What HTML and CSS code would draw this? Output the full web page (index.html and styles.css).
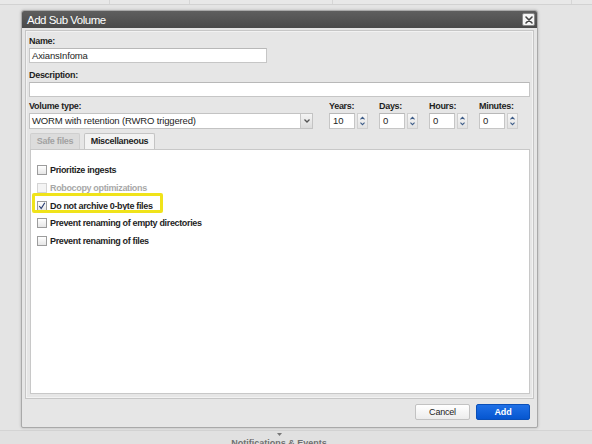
FILE: index.html
```html
<!DOCTYPE html>
<html>
<head>
<meta charset="utf-8">
<link rel="stylesheet" href="styles.css">
</head>
<body>
<div class="page">
  <div class="topbar">
    <span class="cell c1"></span><span class="cell c2"></span><span class="cell c3"></span><span class="cell c4"></span><span class="cell c5"></span>
  </div>
  <div class="spacer"></div>
  <div class="bottombar">
    <span class="caret">
      <svg width="7" height="5" viewBox="0 0 7 5"><path d="M1 1 L3.5 4 L6 1 Z" fill="#777"/></svg>
    </span>
    <span class="notif">Notifications &amp; Events</span>
  </div>
</div>

<div class="dialog">
  <div class="titlebar">
    <span class="title">Add Sub Volume</span>
    <span class="close">
      <svg width="10" height="10" viewBox="0 0 10 10"><path d="M2 2 L8 8 M8 2 L2 8" stroke="#444" stroke-width="1.6" stroke-linecap="round"/></svg>
    </span>
  </div>
  <div class="dbody">
    <div class="panel">
      <div class="field f-name">
        <div class="label">Name:</div>
        <div class="input name">AxiansInfoma</div>
      </div>
      <div class="field f-desc">
        <div class="label">Description:</div>
        <div class="input desc"></div>
      </div>
      <div class="vrow">
        <div class="field f-vt">
          <div class="label">Volume type:</div>
          <div class="select">
            <span class="seltext">WORM with retention (RWRO triggered)</span>
            <span class="selarrow">
              <svg width="8" height="6" viewBox="0 0 8 6"><path d="M1.5 1.5 L4 4 L6.5 1.5" fill="none" stroke="#555" stroke-width="1.3"/></svg>
            </span>
          </div>
        </div>
        <div class="field f-spin">
          <div class="label">Years:</div>
          <div class="spinner">
            <div class="input num">10</div>
            <div class="spinbtn"><svg width="11" height="16" viewBox="0 0 11 16"><path d="M3 6 L5.5 3.5 L8 6" fill="none" stroke="#3d5c88" stroke-width="1.3"/><path d="M3 10 L5.5 12.5 L8 10" fill="none" stroke="#3d5c88" stroke-width="1.3"/></svg></div>
          </div>
        </div>
        <div class="field f-spin">
          <div class="label">Days:</div>
          <div class="spinner">
            <div class="input num">0</div>
            <div class="spinbtn"><svg width="11" height="16" viewBox="0 0 11 16"><path d="M3 6 L5.5 3.5 L8 6" fill="none" stroke="#3d5c88" stroke-width="1.3"/><path d="M3 10 L5.5 12.5 L8 10" fill="none" stroke="#3d5c88" stroke-width="1.3"/></svg></div>
          </div>
        </div>
        <div class="field f-spin">
          <div class="label">Hours:</div>
          <div class="spinner">
            <div class="input num">0</div>
            <div class="spinbtn"><svg width="11" height="16" viewBox="0 0 11 16"><path d="M3 6 L5.5 3.5 L8 6" fill="none" stroke="#3d5c88" stroke-width="1.3"/><path d="M3 10 L5.5 12.5 L8 10" fill="none" stroke="#3d5c88" stroke-width="1.3"/></svg></div>
          </div>
        </div>
        <div class="field f-spin">
          <div class="label">Minutes:</div>
          <div class="spinner">
            <div class="input num">0</div>
            <div class="spinbtn"><svg width="11" height="16" viewBox="0 0 11 16"><path d="M3 6 L5.5 3.5 L8 6" fill="none" stroke="#3d5c88" stroke-width="1.3"/><path d="M3 10 L5.5 12.5 L8 10" fill="none" stroke="#3d5c88" stroke-width="1.3"/></svg></div>
          </div>
        </div>
      </div>
      <div class="tabs">
        <div class="tab">Safe files</div>
        <div class="tab active">Miscellaneous</div>
      </div>
      <div class="tabcontent">
        <div class="cbrow"><span class="cb"></span><span class="cbl">Prioritize ingests</span></div>
        <div class="cbrow disabled"><span class="cb"></span><span class="cbl">Robocopy optimizations</span></div>
        <div class="cbrow highlight"><span class="cb checked"><svg width="8" height="8" viewBox="0 0 8 8"><path d="M1.3 4 L3.2 6.5 L6.8 0.8" fill="none" stroke="#2b3f73" stroke-width="1.2"/></svg></span><span class="cbl">Do not archive 0-byte files</span></div>
        <div class="cbrow"><span class="cb"></span><span class="cbl">Prevent renaming of empty directories</span></div>
        <div class="cbrow"><span class="cb"></span><span class="cbl">Prevent renaming of files</span></div>
      </div>
    </div>
    <div class="footer">
      <button class="btn cancel">Cancel</button>
      <button class="btn add">Add</button>
    </div>
  </div>
</div>
</body>
</html>
```

FILE: styles.css
```css
html, body {
  margin: 0;
  padding: 0;
}
body {
  width: 592px;
  height: 444px;
  overflow: hidden;
  background: #e4e4e4;
  font-family: "Liberation Sans", Arial, sans-serif;
  position: relative;
}
.page {
  height: 444px;
  display: flex;
  flex-direction: column;
}
.topbar {
  height: 4px;
  display: flex;
  background: #e8e8e8;
  border-bottom: 1px solid #d2d2d2;
}
.cell {
  height: 100%;
  border-right: 1px solid #d6d6d6;
  box-sizing: border-box;
}
.c1 { width: 110px; }
.c2 { width: 80px; }
.c3 { width: 143px; }
.c4 { width: 239px; }
.c5 { flex: 1; border-right: none; }
.spacer { flex: 1; }
.bottombar {
  height: 13px;
  border-top: 1px solid #d4d4d4;
  background: #e1e1e1;
  display: flex;
  flex-direction: column;
  align-items: center;
  padding-right: 34px;
  overflow: hidden;
}
.caret {
  height: 6px;
  display: flex;
  align-items: center;
  margin-top: 1px;
}
.notif {
  font-size: 9px;
  font-weight: bold;
  color: #707070;
  line-height: 11px;
  margin-top: 1px;
}

/* dialog (overlay window) */
.dialog {
  position: absolute;
  left: 21px;
  top: 10px;
  width: 517px;
  height: 418px;
  box-sizing: border-box;
  border: 1px solid #a9a9a9;
  border-radius: 3px 3px 2px 2px;
  background: #e6e6e6;
  box-shadow: 0 0 3px rgba(0,0,0,0.22);
  display: flex;
  flex-direction: column;
}
.titlebar {
  height: 17px;
  flex: none;
  background: linear-gradient(#5e5e5e, #4a4a4a);
  border-radius: 2px 2px 0 0;
  display: flex;
  align-items: center;
  justify-content: space-between;
  padding: 0 2px 0 5px;
}
.title {
  color: #fff;
  font-size: 11.5px;
  letter-spacing: -0.5px;
}
.close {
  width: 11px;
  height: 11px;
  background: #f6f6f6;
  border: 1px solid #8a8a8a;
  border-radius: 2px;
  display: flex;
  align-items: center;
  justify-content: center;
}
.dbody {
  flex: 1;
  display: flex;
  flex-direction: column;
  padding: 2px 3px 0 3px;
}
.panel {
  height: 369px;
  box-sizing: border-box;
  border: 1px solid #c6c6c6;
  box-shadow: inset 0 0 0 1px #f2f2f2;
  padding: 5px 3px 0 3px;
  display: flex;
  flex-direction: column;
}
.label {
  font-size: 9px;
  letter-spacing: -0.3px;
  font-weight: bold;
  color: #1e1e1e;
  line-height: 11px;
  height: 11px;
  margin-bottom: 1px;
  white-space: nowrap;
}
.input {
  height: 15px;
  box-sizing: border-box;
  background: #fff;
  border: 1px solid #c6c6c6;
  border-top-color: #b8b8b8;
  font-size: 9.5px;
  letter-spacing: -0.15px;
  color: #1e1e1e;
  line-height: 13px;
  padding-left: 2px;
}
.f-name { margin-bottom: 7px; }
.input.name { width: 238px; }
.f-desc { margin-bottom: 4px; }
.input.desc { width: 501px; }
.vrow {
  display: flex;
  gap: 11px;
}
.f-vt {
  width: 284px;
  margin-right: 5px;
}
.select {
  height: 16px;
  box-sizing: border-box;
  background: #fff;
  border: 1px solid #c3c3c3;
  display: flex;
  align-items: stretch;
}
.seltext {
  flex: 1;
  font-size: 9.5px;
  letter-spacing: -0.15px;
  color: #1e1e1e;
  line-height: 14px;
  padding-left: 2px;
}
.selarrow {
  width: 11px;
  background: linear-gradient(#f4f4f4, #dcdcdc);
  border-left: 1px solid #c8c8c8;
  display: flex;
  align-items: center;
  justify-content: center;
}
.f-spin { width: 39px; }
.spinner {
  display: flex;
  gap: 2px;
  height: 16px;
}
.input.num {
  width: 26px;
  height: 16px;
  line-height: 14px;
  padding-left: 3px;
}
.spinbtn {
  width: 11px;
  height: 16px;
  box-sizing: border-box;
  background: linear-gradient(#f7f7f7, #e2e2e2);
  border: 1px solid #cfcfcf;
  display: flex;
  align-items: center;
  justify-content: center;
}
.spinbtn svg { display: block; }
.tabs {
  display: flex;
  gap: 4px;
  margin-top: 4px;
  margin-left: 1px;
  height: 16px;
}
.tab {
  font-size: 9px;
  letter-spacing: -0.3px;
  font-weight: bold;
  line-height: 15px;
  box-sizing: border-box;
  height: 16px;
  text-align: center;
  border: 1px solid #cfcfcf;
  border-bottom: none;
  border-radius: 2px 2px 0 0;
  background: #dcdcdc;
  color: #a2a2a2;
  width: 50px;
}
.tab.active {
  width: 71px;
  background: #f3f3f3;
  color: #1e1e1e;
  border-color: #c4c4c4;
}
.tabcontent {
  flex: 1;
  margin: 0 0 4px 1px;
  background: #fff;
  border: 1px solid #c8c8c8;
  padding: 11px 0 0 6px;
}
.cbrow {
  height: 17.75px;
  display: flex;
  align-items: center;
  gap: 3px;
  position: relative;
}
.cb {
  width: 10px;
  height: 10px;
  box-sizing: border-box;
  border: 1px solid #9c9c9c;
  background: linear-gradient(#ffffff, #e6e6e6);
  display: flex;
  align-items: center;
  justify-content: center;
}
.cbl {
  font-size: 9px;
  letter-spacing: -0.35px;
  font-weight: bold;
  color: #1e1e1e;
  white-space: nowrap;
}
.cbrow.disabled .cb {
  border-color: #d4d4d4;
  background: #f4f4f4;
}
.cbrow.disabled .cbl {
  color: #a8a8a8;
}
.cbrow.highlight .cbl { margin-top: 2px; }
.cbrow.highlight .cb { margin-top: 1px; }
.cbrow.highlight::before {
  content: "";
  position: absolute;
  left: -5px;
  top: -3.5px;
  width: 131px;
  height: 20px;
  box-sizing: border-box;
  border: 3px solid #f0e31a;
  border-radius: 2px;
}
.footer {
  flex: 1;
  display: flex;
  justify-content: flex-end;
  align-items: flex-start;
  gap: 6px;
  padding: 5px 4px 0 0;
}
.btn {
  height: 16px;
  box-sizing: border-box;
  font-family: "Liberation Sans", Arial, sans-serif;
  font-size: 9px;
  letter-spacing: -0.2px;
  border-radius: 2px;
  padding: 0;
  line-height: 14px;
}
.btn.cancel {
  width: 55px;
  background: linear-gradient(#ffffff, #ececec);
  border: 1px solid #c2c2c2;
  color: #222;
}
.btn.add {
  width: 54px;
  background: linear-gradient(#1f70e6, #0656d0);
  border: 1px solid #0a4fb8;
  color: #fff;
  font-weight: bold;
}
```
